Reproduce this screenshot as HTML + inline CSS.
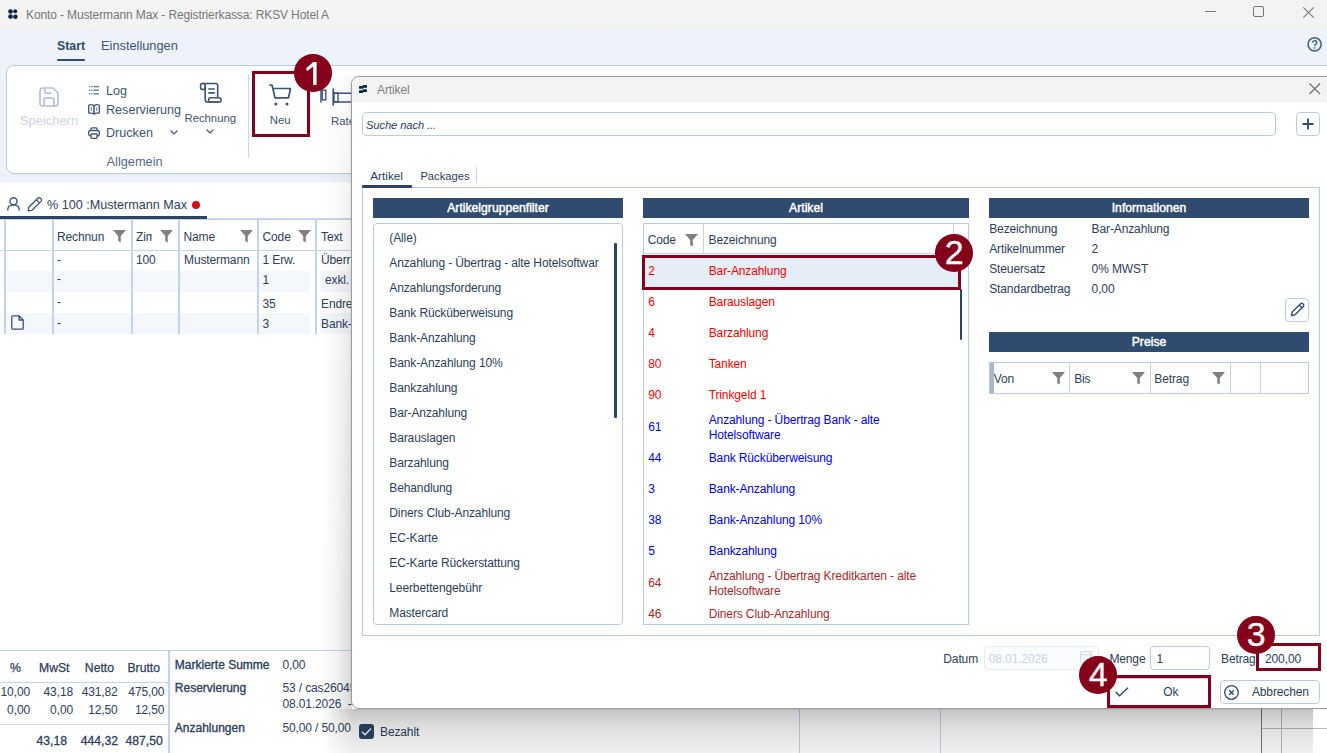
<!DOCTYPE html>
<html><head><meta charset="utf-8">
<style>
*{box-sizing:border-box;margin:0;padding:0}
html,body{width:1327px;height:753px;overflow:hidden;background:#fff;font-family:"Liberation Sans",sans-serif;position:relative}
.a{position:absolute;white-space:nowrap}
.t{position:absolute;white-space:nowrap;line-height:1}
svg{overflow:visible}
</style></head><body>
<div class="a" style="left:0px;top:0px;width:1327px;height:30px;background:#f3f3f3"></div>
<svg class="a" style="left:8px;top:9px" width="10" height="11" viewBox="0 0 10 11"><circle cx="2.5" cy="2.5" r="2.3" fill="#0e2440"/><circle cx="7.2" cy="2.2" r="2" fill="#0e2440"/><circle cx="2.5" cy="7.6" r="2.3" fill="#0e2440"/><circle cx="7.4" cy="7.8" r="2.3" fill="#0e2440"/></svg>
<div class="t" style="left:26px;top:9px;font-size:12px;color:#777777;font-weight:normal;font-style:normal;letter-spacing:-0.12px;">Konto - Mustermann Max - Registrierkassa: RKSV Hotel A</div>
<div class="a" style="left:1205px;top:11px;width:11px;height:1px;background:#7a7a7a"></div>
<div class="a" style="left:1253px;top:6px;width:11px;height:11px;border:1px solid #777;border-radius:2px"></div>
<svg class="a" style="left:1303px;top:6.5px" width="11" height="11" viewBox="0 0 11 11"><path d="M0.3 0.3 L10.7 10.7 M10.7 0.3 L0.3 10.7" stroke="#777" stroke-width="1.1"/></svg>
<div class="a" style="left:0px;top:27px;width:1327px;height:156px;background:#eef2f9;clip-path:polygon(0 2.5px,100% 0.2px,100% 100%,0 100%)"></div>
<div class="t" style="left:57px;top:40px;font-size:12.3px;color:#2f4a6e;font-weight:bold;font-style:normal;">Start</div>
<div class="t" style="left:101px;top:40px;font-size:12.8px;color:#3d5476;font-weight:normal;font-style:normal;">Einstellungen</div>
<div class="a" style="left:57px;top:59px;width:28px;height:2px;background:#2f4a6e;border-radius:1px"></div>
<svg class="a" style="left:1307px;top:37px" width="15" height="15" viewBox="0 0 15 15"><circle cx="7.6" cy="7.3" r="6.6" fill="none" stroke="#4a6388" stroke-width="1.6"/><path d="M5.5 5.7 a2.1 2.1 0 1 1 3 1.9 c-0.7 0.3 -0.9 0.7 -0.9 1.4" fill="none" stroke="#4a6388" stroke-width="1.5"/><circle cx="7.6" cy="10.8" r="0.9" fill="#4a6388"/></svg>
<div class="a" style="left:6px;top:65px;width:1400px;height:109px;background:#fff;border:1px solid #b8cbe6;border-radius:8px"></div>
<div class="a" style="left:0px;top:174px;width:1327px;height:9px;background:linear-gradient(#e9eef6,#f3f6fa)"></div>
<div class="a" style="left:0px;top:183px;width:1327px;height:570px;background:#fff"></div>
<svg class="a" style="left:39px;top:87px" width="20" height="20" viewBox="0 0 20 20"><path d="M2.5 1 H14 L19 6 V16.5 a2.5 2.5 0 0 1 -2.5 2.5 H3.5 a2.5 2.5 0 0 1 -2.5 -2.5 V3.5 a2.5 2.5 0 0 1 2.5 -2.5 Z" fill="none" stroke="#b5c1d1" stroke-width="1.7"/><path d="M6 1.2 V5 a1.2 1.2 0 0 0 1.2 1.2 H12.5" fill="none" stroke="#b5c1d1" stroke-width="1.7"/><path d="M5 19 V12.5 a1.3 1.3 0 0 1 1.3 -1.3 H13.7 a1.3 1.3 0 0 1 1.3 1.3 V19" fill="none" stroke="#b5c1d1" stroke-width="1.7"/></svg>
<div class="t" style="left:20px;top:115px;font-size:12.9px;color:#cdd5df;font-weight:normal;font-style:normal;">Speichern</div>
<svg class="a" style="left:89px;top:86px" width="10" height="9" viewBox="0 0 10 9"><g fill="#3d5476" opacity="0.8"><rect x="0" y="0" width="1.3" height="1.3"/><rect x="2.2" y="0" width="1.3" height="1.3"/><rect x="4.4" y="0" width="5.6" height="1.3"/><rect x="0" y="3.6" width="1.3" height="1.3"/><rect x="2.2" y="3.6" width="1.3" height="1.3"/><rect x="4.4" y="3.6" width="5.6" height="1.3"/><rect x="0" y="7.2" width="1.3" height="1.3"/><rect x="2.2" y="7.2" width="1.3" height="1.3"/><rect x="4.4" y="7.2" width="5.6" height="1.3"/></g></svg>
<div class="t" style="left:106px;top:85px;font-size:12.6px;color:#3d5476;font-weight:normal;font-style:normal;">Log</div>
<svg class="a" style="left:88px;top:104px" width="12" height="11" viewBox="0 0 12 11"><path d="M6 1.8 C4.5 0.6 2.5 0.6 1.2 1 a0.6 0.6 0 0 0 -0.5 0.6 V8.6 a0.6 0.6 0 0 0 0.6 0.6 C2.8 8.9 4.6 9 6 9.8 C7.4 9 9.2 8.9 10.7 9.2 a0.6 0.6 0 0 0 0.6 -0.6 V1.6 a0.6 0.6 0 0 0 -0.5 -0.6 C9.5 0.6 7.5 0.6 6 1.8 Z" fill="none" stroke="#3d5476" stroke-width="1.3"/><path d="M6 1.8 V10.8" stroke="#3d5476" stroke-width="1.5"/><path d="M3.3 3.2 V6.8 M8.7 3.2 V6.8" stroke="#3d5476" stroke-width="0.8"/></svg>
<div class="t" style="left:106px;top:104px;font-size:12.6px;color:#3d5476;font-weight:normal;font-style:normal;">Reservierung</div>
<svg class="a" style="left:88px;top:127px" width="12" height="12" viewBox="0 0 12 12"><path d="M3 3.5 V1.8 a1 1 0 0 1 1 -1 H8 a1 1 0 0 1 1 1 V3.5" fill="none" stroke="#3d5476" stroke-width="1.3"/><rect x="0.7" y="3.5" width="10.6" height="5.5" rx="2" fill="none" stroke="#3d5476" stroke-width="1.3"/><rect x="3" y="7" width="6" height="4.3" rx="0.8" fill="#fff" stroke="#3d5476" stroke-width="1.3"/></svg>
<div class="t" style="left:106px;top:127px;font-size:12.6px;color:#3d5476;font-weight:normal;font-style:normal;">Drucken</div>
<svg class="a" style="left:170px;top:130px" width="8" height="5" viewBox="0 0 8 5"><path d="M0.5 0.5 L4 4 L7.5 0.5" fill="none" stroke="#3d5476" stroke-width="1.1"/></svg>
<svg class="a" style="left:196px;top:80px" width="30" height="26" viewBox="0 0 30 26"><g fill="none" stroke="#3d5476" stroke-width="1.6"><rect x="4.6" y="3.5" width="4.6" height="5.9" rx="1.7"/><path d="M6.3 3.5 H20 a1.7 1.7 0 0 1 1.7 1.7 V17.8"/><path d="M9.2 5 V19.8 a2.2 2.2 0 0 0 2.2 2.2 H23"/><rect x="12.6" y="17.8" width="12.4" height="4.2" rx="2.1"/><path d="M12.3 9 H18.8 M12.3 12.9 H18.8"/></g></svg>
<div class="t" style="left:184.5px;top:113px;font-size:11.3px;color:#3d5476;font-weight:normal;font-style:normal;">Rechnung</div>
<svg class="a" style="left:206px;top:129px" width="8" height="5" viewBox="0 0 8 5"><path d="M0.5 0.5 L4 4 L7.5 0.5" fill="none" stroke="#3d5476" stroke-width="1.1"/></svg>
<div class="t" style="left:106.5px;top:156px;font-size:12.8px;color:#56698a;font-weight:normal;font-style:normal;">Allgemein</div>
<div class="a" style="left:248px;top:75px;width:1px;height:83px;background:#c7d6ea"></div>
<svg class="a" style="left:269px;top:84px" width="23" height="23" viewBox="0 0 23 23"><path d="M0.8 1 H3 L6 13.8 H19.5 L21.5 4.5 H4.5" fill="none" stroke="#3d5476" stroke-width="1.7" stroke-linejoin="round" stroke-linecap="round"/><circle cx="6.8" cy="20" r="1.5" fill="#3d5476"/><circle cx="18" cy="20" r="1.5" fill="#3d5476"/></svg>
<div class="t" style="left:269.7px;top:115px;font-size:11.4px;color:#3d5476;font-weight:normal;font-style:normal;">Neu</div>
<svg class="a" style="left:320px;top:88px" width="32" height="18" viewBox="0 0 32 18"><path d="M1 2 V14.5" stroke="#3d5476" stroke-width="1.5"/><rect x="2.2" y="2.2" width="3.6" height="9.6" fill="none" stroke="#3d5476" stroke-width="1.4"/><path d="M13.2 0.5 V17.5" stroke="#3d5476" stroke-width="1.6"/><rect x="14" y="5" width="4" height="9" fill="none" stroke="#3d5476" stroke-width="1.4"/><path d="M14 5.3 H32 M14 14 H32" stroke="#3d5476" stroke-width="1.6"/></svg>
<div class="t" style="left:331px;top:116px;font-size:11.4px;color:#3d5476;font-weight:normal;font-style:normal;">Rate</div>
<svg class="a" style="left:7px;top:197px" width="13" height="14" viewBox="0 0 13 14"><circle cx="6.5" cy="4.2" r="3.5" fill="none" stroke="#3d5476" stroke-width="1.4"/><path d="M0.8 13.5 V12.5 a4.5 4.5 0 0 1 4.5 -4.5 H7.7 a4.5 4.5 0 0 1 4.5 4.5 V13.5" fill="none" stroke="#3d5476" stroke-width="1.4"/></svg>
<svg class="a" style="left:27px;top:197px" width="16" height="15" viewBox="0 0 16 15"><path d="M1.2 13.8 L1.8 10.2 L10.8 1.2 a1.8 1.8 0 0 1 2.6 0 L14 1.8 a1.8 1.8 0 0 1 0 2.6 L5 13.3 Z M9.3 2.8 L12.4 5.9" fill="none" stroke="#3d5476" stroke-width="1.3" stroke-linejoin="round"/></svg>
<div class="t" style="left:47px;top:199px;font-size:12.6px;color:#2d4060;font-weight:normal;font-style:normal;">% 100 :Mustermann Max</div>
<div class="a" style="left:191.5px;top:200.5px;width:8px;height:8px;border-radius:50%;background:#d40f14"></div>
<div class="a" style="left:0px;top:218px;width:351px;height:1px;background:#c9d8ec"></div>
<div class="a" style="left:0px;top:216px;width:207px;height:2.5px;background:#2b4466"></div>
<div class="a" style="left:0px;top:219px;width:351px;height:1px;background:#c3d4ea"></div>
<div class="a" style="left:0px;top:250px;width:351px;height:1px;background:#c3d4ea"></div>
<div class="a" style="left:5px;top:271px;width:305px;height:21px;background:#f4f7fb"></div>
<div class="a" style="left:5px;top:313px;width:305px;height:21px;background:#f4f7fb"></div>
<div class="a" style="left:320px;top:271px;width:31px;height:21px;background:#f4f7fb"></div>
<div class="a" style="left:320px;top:313px;width:31px;height:21px;background:#f4f7fb"></div>
<div class="a" style="left:4px;top:219px;width:1.5px;height:115px;background:#c3d4ea"></div>
<div class="a" style="left:52px;top:219px;width:1.5px;height:115px;background:#c3d4ea"></div>
<div class="a" style="left:131px;top:219px;width:1.5px;height:115px;background:#c3d4ea"></div>
<div class="a" style="left:178px;top:219px;width:1.5px;height:115px;background:#c3d4ea"></div>
<div class="a" style="left:257px;top:219px;width:1.5px;height:115px;background:#c3d4ea"></div>
<div class="a" style="left:315px;top:219px;width:1.5px;height:115px;background:#c3d4ea"></div>
<div class="t" style="left:57px;top:231px;font-size:12px;color:#2d4060;font-weight:normal;font-style:normal;letter-spacing:-0.12px;">Rechnun</div>
<div class="t" style="left:136px;top:231px;font-size:12px;color:#2d4060;font-weight:normal;font-style:normal;letter-spacing:-0.12px;">Zim</div>
<div class="a" style="left:152px;top:228px;width:10px;height:16px;background:#fff"></div>
<div class="t" style="left:183.5px;top:231px;font-size:12px;color:#2d4060;font-weight:normal;font-style:normal;letter-spacing:-0.12px;">Name</div>
<div class="t" style="left:262.5px;top:231px;font-size:12px;color:#2d4060;font-weight:normal;font-style:normal;letter-spacing:-0.12px;">Code</div>
<div class="t" style="left:321px;top:231px;font-size:12px;color:#2d4060;font-weight:normal;font-style:normal;letter-spacing:-0.12px;">Text</div>
<svg class="a" style="left:113px;top:230px" width="13" height="13" viewBox="0 0 13 13"><path d="M0 0 H13 L7.8 6 V12.5 L5.2 11 V6 Z" fill="#808080"/></svg>
<svg class="a" style="left:160px;top:230px" width="13" height="13" viewBox="0 0 13 13"><path d="M0 0 H13 L7.8 6 V12.5 L5.2 11 V6 Z" fill="#808080"/></svg>
<svg class="a" style="left:239.5px;top:230px" width="13" height="13" viewBox="0 0 13 13"><path d="M0 0 H13 L7.8 6 V12.5 L5.2 11 V6 Z" fill="#808080"/></svg>
<svg class="a" style="left:297.5px;top:230px" width="13" height="13" viewBox="0 0 13 13"><path d="M0 0 H13 L7.8 6 V12.5 L5.2 11 V6 Z" fill="#808080"/></svg>
<div class="t" style="left:57px;top:254px;font-size:12px;color:#2d4060;font-weight:normal;font-style:normal;letter-spacing:-0.12px;">-</div>
<div class="t" style="left:136px;top:254px;font-size:12px;color:#2d4060;font-weight:normal;font-style:normal;letter-spacing:-0.12px;">100</div>
<div class="t" style="left:184px;top:254px;font-size:12px;color:#2d4060;font-weight:normal;font-style:normal;letter-spacing:-0.12px;">Mustermann</div>
<div class="t" style="left:262.5px;top:254px;font-size:12px;color:#2d4060;font-weight:normal;font-style:normal;letter-spacing:-0.12px;">1 Erw.</div>
<div class="t" style="left:321px;top:254px;font-size:12px;color:#2d4060;font-weight:normal;font-style:normal;letter-spacing:-0.12px;">Überr</div>
<div class="t" style="left:57px;top:273px;font-size:12px;color:#2d4060;font-weight:normal;font-style:normal;letter-spacing:-0.12px;">-</div>
<div class="t" style="left:262.5px;top:274px;font-size:12px;color:#2d4060;font-weight:normal;font-style:normal;letter-spacing:-0.12px;">1</div>
<div class="t" style="left:325px;top:274px;font-size:12px;color:#2d4060;font-weight:normal;font-style:normal;letter-spacing:-0.12px;">exkl.</div>
<div class="t" style="left:57px;top:296px;font-size:12px;color:#2d4060;font-weight:normal;font-style:normal;letter-spacing:-0.12px;">-</div>
<div class="t" style="left:262.5px;top:298px;font-size:12px;color:#2d4060;font-weight:normal;font-style:normal;letter-spacing:-0.12px;">35</div>
<div class="t" style="left:321px;top:298px;font-size:12px;color:#2d4060;font-weight:normal;font-style:normal;letter-spacing:-0.12px;">Endre</div>
<div class="t" style="left:57px;top:317px;font-size:12px;color:#2d4060;font-weight:normal;font-style:normal;letter-spacing:-0.12px;">-</div>
<div class="t" style="left:262.5px;top:318px;font-size:12px;color:#2d4060;font-weight:normal;font-style:normal;letter-spacing:-0.12px;">3</div>
<div class="t" style="left:321px;top:318px;font-size:12px;color:#2d4060;font-weight:normal;font-style:normal;letter-spacing:-0.12px;">Bank-</div>
<svg class="a" style="left:11px;top:315px" width="13" height="15" viewBox="0 0 13 15"><path d="M0.8 1.8 a1 1 0 0 1 1 -1 H8 L12.2 5 V13.2 a1 1 0 0 1 -1 1 H1.8 a1 1 0 0 1 -1 -1 Z M8 0.8 V5 H12.2" fill="none" stroke="#3d5476" stroke-width="1.3" stroke-linejoin="round"/></svg>
<div class="a" style="left:0px;top:650px;width:351px;height:1px;background:#c3d4ea"></div>
<div class="a" style="left:168px;top:650px;width:1.5px;height:103px;background:#c3d4ea"></div>
<div class="a" style="left:0px;top:682px;width:169px;height:1px;background:#c3d4ea"></div>
<div class="a" style="left:0px;top:724px;width:169px;height:1px;background:#c3d4ea"></div>
<div class="t" style="left:10px;top:662px;font-size:12.2px;color:#2d4060;font-weight:normal;font-style:normal;-webkit-text-stroke:0.25px #2d4060;">%</div>
<div class="t" style="right:1257.5px;top:662px;font-size:12.2px;color:#2d4060;font-weight:normal;font-style:normal;-webkit-text-stroke:0.25px #2d4060;">MwSt</div>
<div class="t" style="right:1213px;top:662px;font-size:12.2px;color:#2d4060;font-weight:normal;font-style:normal;-webkit-text-stroke:0.25px #2d4060;">Netto</div>
<div class="t" style="right:1167px;top:662px;font-size:12.2px;color:#2d4060;font-weight:normal;font-style:normal;-webkit-text-stroke:0.25px #2d4060;">Brutto</div>
<div class="t" style="right:1297px;top:686px;font-size:12px;color:#2d4060;font-weight:normal;font-style:normal;letter-spacing:-0.12px;">10,00</div>
<div class="t" style="right:1254px;top:686px;font-size:12px;color:#2d4060;font-weight:normal;font-style:normal;letter-spacing:-0.12px;">43,18</div>
<div class="t" style="right:1209.4px;top:686px;font-size:12px;color:#2d4060;font-weight:normal;font-style:normal;letter-spacing:-0.12px;">431,82</div>
<div class="t" style="right:1162.7px;top:686px;font-size:12px;color:#2d4060;font-weight:normal;font-style:normal;letter-spacing:-0.12px;">475,00</div>
<div class="t" style="right:1297px;top:704px;font-size:12px;color:#2d4060;font-weight:normal;font-style:normal;letter-spacing:-0.12px;">0,00</div>
<div class="t" style="right:1254px;top:704px;font-size:12px;color:#2d4060;font-weight:normal;font-style:normal;letter-spacing:-0.12px;">0,00</div>
<div class="t" style="right:1209.4px;top:704px;font-size:12px;color:#2d4060;font-weight:normal;font-style:normal;letter-spacing:-0.12px;">12,50</div>
<div class="t" style="right:1162.7px;top:704px;font-size:12px;color:#2d4060;font-weight:normal;font-style:normal;letter-spacing:-0.12px;">12,50</div>
<div class="t" style="right:1260px;top:735px;font-size:12.2px;color:#2d4060;font-weight:normal;font-style:normal;-webkit-text-stroke:0.3px #2d4060;">43,18</div>
<div class="t" style="right:1209px;top:735px;font-size:12.2px;color:#2d4060;font-weight:normal;font-style:normal;-webkit-text-stroke:0.3px #2d4060;">444,32</div>
<div class="t" style="right:1164.2px;top:735px;font-size:12.2px;color:#2d4060;font-weight:normal;font-style:normal;-webkit-text-stroke:0.3px #2d4060;">487,50</div>
<div class="t" style="left:174.8px;top:659px;font-size:12px;color:#2d4060;font-weight:normal;font-style:normal;-webkit-text-stroke:0.35px #2d4060;">Markierte Summe</div>
<div class="t" style="left:282.4px;top:659px;font-size:12px;color:#2d4060;font-weight:normal;font-style:normal;letter-spacing:-0.12px;">0,00</div>
<div class="t" style="left:174.8px;top:682px;font-size:12px;color:#2d4060;font-weight:normal;font-style:normal;-webkit-text-stroke:0.35px #2d4060;">Reservierung</div>
<div class="t" style="left:282.4px;top:682px;font-size:12px;color:#2d4060;font-weight:normal;font-style:normal;letter-spacing:-0.12px;">53 / cas26045</div>
<div class="t" style="left:282.4px;top:698px;font-size:12px;color:#2d4060;font-weight:normal;font-style:normal;letter-spacing:-0.12px;white-space:pre;">08.01.2026  -</div>
<div class="t" style="left:174.8px;top:722px;font-size:12px;color:#2d4060;font-weight:normal;font-style:normal;-webkit-text-stroke:0.35px #2d4060;">Anzahlungen</div>
<div class="t" style="left:282.4px;top:722px;font-size:12px;color:#2d4060;font-weight:normal;font-style:normal;letter-spacing:-0.12px;">50,00 / 50,00</div>
<div class="a" style="left:359px;top:724px;width:15px;height:15px;border-radius:3px;background:#2b4466"></div>
<svg class="a" style="left:359px;top:724px" width="15" height="15" viewBox="0 0 15 15"><path d="M3 7.8 L6 10.8 L12 4.5" fill="none" stroke="#fff" stroke-width="1.3"/></svg>
<div class="t" style="left:380px;top:726px;font-size:12px;color:#2d4060;font-weight:normal;font-style:normal;letter-spacing:-0.12px;">Bezahlt</div>
<div class="a" style="left:799px;top:700px;width:1px;height:53px;background:#c3d4ea"></div>
<div class="a" style="left:940px;top:700px;width:1px;height:53px;background:#c3d4ea"></div>
<div class="a" style="left:1261px;top:709px;width:66px;height:44px;background:#fff"></div>
<div class="a" style="left:1261px;top:709px;width:1.2px;height:44px;background:#777"></div>
<div class="a" style="left:1281px;top:709px;width:1px;height:44px;background:#bbb"></div>
<div class="a" style="left:1262px;top:728px;width:65px;height:1px;background:#bbb"></div>
<div class="a" style="left:321px;top:76px;width:31px;height:633px;background:linear-gradient(to right,rgba(0,0,0,0),rgba(0,0,0,.05) 50%,rgba(0,0,0,.15));-webkit-mask-image:linear-gradient(rgba(0,0,0,.15),rgba(0,0,0,.5) 30%,#000 85%)"></div>
<div class="a" style="left:321px;top:709px;width:992px;height:44px;background:linear-gradient(rgba(0,0,0,.23),rgba(0,0,0,.13) 40%,rgba(0,0,0,.06));-webkit-mask-image:linear-gradient(to right,transparent,#000 32px)"></div>
<div class="a" style="left:351px;top:76px;width:990px;height:633px;background:#fff;border:1px solid #9c9c9c;border-radius:8px;box-shadow:0 0 3px rgba(0,0,0,.12)"></div>
<div class="a" style="left:352px;top:77px;width:990px;height:25px;background:#f3f3f3;border-radius:7px 0 0 0"></div>
<svg class="a" style="left:359px;top:84px" width="8" height="10" viewBox="0 0 8 10"><g fill="#0c2541"><rect x="0" y="2" width="4.3" height="2.8" rx="0.6"/><rect x="3.7" y="1" width="4.3" height="2.8" rx="0.6"/><rect x="0" y="6.3" width="4.3" height="2.8" rx="0.6"/><rect x="3.7" y="5.3" width="4.3" height="2.8" rx="0.6"/></g></svg>
<div class="t" style="left:377px;top:84px;font-size:12px;color:#808080;font-weight:normal;font-style:normal;letter-spacing:-0.12px;">Artikel</div>
<svg class="a" style="left:1309px;top:83px" width="12" height="12" viewBox="0 0 12 12"><path d="M0.5 0.5 L11 11 M11 0.5 L0.5 11" stroke="#6a6a6a" stroke-width="1.1"/></svg>
<div class="a" style="left:362px;top:112px;width:914px;height:24px;border:1px solid #b8cbe6;border-radius:4px;background:#fff"></div>
<div class="t" style="left:366px;top:120px;font-size:11.2px;color:#2c3e5c;font-weight:normal;font-style:italic;letter-spacing:-0.1px;">Suche nach ...</div>
<div class="a" style="left:1296px;top:112px;width:24px;height:24px;border:1px solid #b8cbe6;border-radius:4px;background:#fff"></div>
<svg class="a" style="left:1302px;top:118px" width="12" height="12" viewBox="0 0 12 12"><path d="M6 0.5 V11.5 M0.5 6 H11.5" stroke="#2f4a6e" stroke-width="1.8"/></svg>
<div class="t" style="left:370.2px;top:171px;font-size:11.8px;color:#2c3e5c;font-weight:normal;font-style:normal;">Artikel</div>
<div class="t" style="left:420.4px;top:171px;font-size:11.2px;color:#2c3e5c;font-weight:normal;font-style:normal;">Packages</div>
<div class="a" style="left:476px;top:167px;width:1px;height:16px;background:#c3d4ea"></div>
<div class="a" style="left:362px;top:187px;width:958px;height:449px;border:1px solid #b8cbe6"></div>
<div class="a" style="left:362px;top:185px;width:50px;height:2.5px;background:#2b4466;border-radius:1px"></div>
<div class="a" style="left:373px;top:198px;width:250px;height:20px;background:#2f4b6f"></div>
<div class="t" style="left:498px;transform:translateX(-50%);top:202px;font-size:12.2px;color:#fff;font-weight:normal;font-style:normal;-webkit-text-stroke:0.45px #fff;">Artikelgruppenfilter</div>
<div class="a" style="left:643px;top:198px;width:326px;height:20px;background:#2f4b6f"></div>
<div class="t" style="left:806px;transform:translateX(-50%);top:202px;font-size:12.2px;color:#fff;font-weight:normal;font-style:normal;-webkit-text-stroke:0.45px #fff;">Artikel</div>
<div class="a" style="left:989px;top:198px;width:320px;height:20px;background:#2f4b6f"></div>
<div class="t" style="left:1149px;transform:translateX(-50%);top:202px;font-size:12.2px;color:#fff;font-weight:normal;font-style:normal;-webkit-text-stroke:0.45px #fff;">Informationen</div>
<div class="a" style="left:373px;top:223px;width:250px;height:402px;border:1px solid #b8cbe6;border-radius:4px"></div>
<div class="t" style="left:389.3px;top:232px;font-size:12px;color:#2c3e5c;font-weight:normal;font-style:normal;letter-spacing:-0.12px;width:218px;clip-path:inset(-10px 0 -10px 0);">(Alle)</div>
<div class="t" style="left:389.3px;top:257px;font-size:12px;color:#2c3e5c;font-weight:normal;font-style:normal;letter-spacing:-0.12px;width:218px;clip-path:inset(-10px 0 -10px 0);">Anzahlung - Übertrag - alte Hotelsoftwar</div>
<div class="t" style="left:389.3px;top:282px;font-size:12px;color:#2c3e5c;font-weight:normal;font-style:normal;letter-spacing:-0.12px;width:218px;clip-path:inset(-10px 0 -10px 0);">Anzahlungsforderung</div>
<div class="t" style="left:389.3px;top:307px;font-size:12px;color:#2c3e5c;font-weight:normal;font-style:normal;letter-spacing:-0.12px;width:218px;clip-path:inset(-10px 0 -10px 0);">Bank Rücküberweisung</div>
<div class="t" style="left:389.3px;top:332px;font-size:12px;color:#2c3e5c;font-weight:normal;font-style:normal;letter-spacing:-0.12px;width:218px;clip-path:inset(-10px 0 -10px 0);">Bank-Anzahlung</div>
<div class="t" style="left:389.3px;top:357px;font-size:12px;color:#2c3e5c;font-weight:normal;font-style:normal;letter-spacing:-0.12px;width:218px;clip-path:inset(-10px 0 -10px 0);">Bank-Anzahlung 10%</div>
<div class="t" style="left:389.3px;top:382px;font-size:12px;color:#2c3e5c;font-weight:normal;font-style:normal;letter-spacing:-0.12px;width:218px;clip-path:inset(-10px 0 -10px 0);">Bankzahlung</div>
<div class="t" style="left:389.3px;top:407px;font-size:12px;color:#2c3e5c;font-weight:normal;font-style:normal;letter-spacing:-0.12px;width:218px;clip-path:inset(-10px 0 -10px 0);">Bar-Anzahlung</div>
<div class="t" style="left:389.3px;top:432px;font-size:12px;color:#2c3e5c;font-weight:normal;font-style:normal;letter-spacing:-0.12px;width:218px;clip-path:inset(-10px 0 -10px 0);">Barauslagen</div>
<div class="t" style="left:389.3px;top:457px;font-size:12px;color:#2c3e5c;font-weight:normal;font-style:normal;letter-spacing:-0.12px;width:218px;clip-path:inset(-10px 0 -10px 0);">Barzahlung</div>
<div class="t" style="left:389.3px;top:482px;font-size:12px;color:#2c3e5c;font-weight:normal;font-style:normal;letter-spacing:-0.12px;width:218px;clip-path:inset(-10px 0 -10px 0);">Behandlung</div>
<div class="t" style="left:389.3px;top:507px;font-size:12px;color:#2c3e5c;font-weight:normal;font-style:normal;letter-spacing:-0.12px;width:218px;clip-path:inset(-10px 0 -10px 0);">Diners Club-Anzahlung</div>
<div class="t" style="left:389.3px;top:532px;font-size:12px;color:#2c3e5c;font-weight:normal;font-style:normal;letter-spacing:-0.12px;width:218px;clip-path:inset(-10px 0 -10px 0);">EC-Karte</div>
<div class="t" style="left:389.3px;top:557px;font-size:12px;color:#2c3e5c;font-weight:normal;font-style:normal;letter-spacing:-0.12px;width:218px;clip-path:inset(-10px 0 -10px 0);">EC-Karte Rückerstattung</div>
<div class="t" style="left:389.3px;top:582px;font-size:12px;color:#2c3e5c;font-weight:normal;font-style:normal;letter-spacing:-0.12px;width:218px;clip-path:inset(-10px 0 -10px 0);">Leerbettengebühr</div>
<div class="t" style="left:389.3px;top:607px;font-size:12px;color:#2c3e5c;font-weight:normal;font-style:normal;letter-spacing:-0.12px;width:218px;clip-path:inset(-10px 0 -10px 0);">Mastercard</div>
<div class="a" style="left:614px;top:243px;width:2.5px;height:175px;background:#2b4466;border-radius:1px"></div>
<div class="a" style="left:643px;top:223px;width:326px;height:402px;border:1px solid #b8cbe6"></div>
<div class="a" style="left:644px;top:253px;width:324px;height:1px;background:#c3d4ea"></div>
<div class="a" style="left:703px;top:224px;width:1px;height:30px;background:#c3d4ea"></div>
<div class="a" style="left:953px;top:224px;width:1px;height:30px;background:#c3d4ea"></div>
<div class="t" style="left:647.7px;top:234px;font-size:12px;color:#2c3e5c;font-weight:normal;font-style:normal;letter-spacing:-0.12px;">Code</div>
<svg class="a" style="left:685px;top:233.5px" width="13" height="13" viewBox="0 0 13 13"><path d="M0 0 H13 L7.8 6 V12.5 L5.2 11 V6 Z" fill="#808080"/></svg>
<div class="t" style="left:708.5px;top:234px;font-size:12px;color:#2c3e5c;font-weight:normal;font-style:normal;letter-spacing:-0.12px;">Bezeichnung</div>
<div class="a" style="left:644px;top:255px;width:316px;height:33px;background:#e5edf7"></div>
<div class="t" style="left:648.3px;top:265px;font-size:12px;color:#ff0000;font-weight:normal;font-style:normal;letter-spacing:-0.12px;">2</div>
<div class="t" style="left:708.7px;top:265px;font-size:12px;color:#ff0000;font-weight:normal;font-style:normal;letter-spacing:-0.12px;">Bar-Anzahlung</div>
<div class="t" style="left:648.3px;top:296px;font-size:12px;color:#ff0000;font-weight:normal;font-style:normal;letter-spacing:-0.12px;">6</div>
<div class="t" style="left:708.7px;top:296px;font-size:12px;color:#ff0000;font-weight:normal;font-style:normal;letter-spacing:-0.12px;">Barauslagen</div>
<div class="t" style="left:648.3px;top:327px;font-size:12px;color:#ff0000;font-weight:normal;font-style:normal;letter-spacing:-0.12px;">4</div>
<div class="t" style="left:708.7px;top:327px;font-size:12px;color:#ff0000;font-weight:normal;font-style:normal;letter-spacing:-0.12px;">Barzahlung</div>
<div class="t" style="left:648.3px;top:358px;font-size:12px;color:#ff0000;font-weight:normal;font-style:normal;letter-spacing:-0.12px;">80</div>
<div class="t" style="left:708.7px;top:358px;font-size:12px;color:#ff0000;font-weight:normal;font-style:normal;letter-spacing:-0.12px;">Tanken</div>
<div class="t" style="left:648.3px;top:389px;font-size:12px;color:#ff0000;font-weight:normal;font-style:normal;letter-spacing:-0.12px;">90</div>
<div class="t" style="left:708.7px;top:389px;font-size:12px;color:#ff0000;font-weight:normal;font-style:normal;letter-spacing:-0.12px;">Trinkgeld 1</div>
<div class="t" style="left:648.3px;top:421px;font-size:12px;color:#0000ff;font-weight:normal;font-style:normal;letter-spacing:-0.12px;">61</div>
<div class="t" style="left:708.7px;top:414px;font-size:12px;color:#0000ff;font-weight:normal;font-style:normal;letter-spacing:-0.12px;">Anzahlung - Übertrag Bank - alte</div>
<div class="t" style="left:708.7px;top:429px;font-size:12px;color:#0000ff;font-weight:normal;font-style:normal;letter-spacing:-0.12px;">Hotelsoftware</div>
<div class="t" style="left:648.3px;top:452px;font-size:12px;color:#0000ff;font-weight:normal;font-style:normal;letter-spacing:-0.12px;">44</div>
<div class="t" style="left:708.7px;top:452px;font-size:12px;color:#0000ff;font-weight:normal;font-style:normal;letter-spacing:-0.12px;">Bank Rücküberweisung</div>
<div class="t" style="left:648.3px;top:483px;font-size:12px;color:#0000ff;font-weight:normal;font-style:normal;letter-spacing:-0.12px;">3</div>
<div class="t" style="left:708.7px;top:483px;font-size:12px;color:#0000ff;font-weight:normal;font-style:normal;letter-spacing:-0.12px;">Bank-Anzahlung</div>
<div class="t" style="left:648.3px;top:514px;font-size:12px;color:#0000ff;font-weight:normal;font-style:normal;letter-spacing:-0.12px;">38</div>
<div class="t" style="left:708.7px;top:514px;font-size:12px;color:#0000ff;font-weight:normal;font-style:normal;letter-spacing:-0.12px;">Bank-Anzahlung 10%</div>
<div class="t" style="left:648.3px;top:545px;font-size:12px;color:#0000ff;font-weight:normal;font-style:normal;letter-spacing:-0.12px;">5</div>
<div class="t" style="left:708.7px;top:545px;font-size:12px;color:#0000ff;font-weight:normal;font-style:normal;letter-spacing:-0.12px;">Bankzahlung</div>
<div class="t" style="left:648.3px;top:577px;font-size:12px;color:#a52a2a;font-weight:normal;font-style:normal;letter-spacing:-0.12px;">64</div>
<div class="t" style="left:708.7px;top:570px;font-size:12px;color:#a52a2a;font-weight:normal;font-style:normal;letter-spacing:-0.12px;">Anzahlung - Übertrag Kreditkarten - alte</div>
<div class="t" style="left:708.7px;top:585px;font-size:12px;color:#a52a2a;font-weight:normal;font-style:normal;letter-spacing:-0.12px;">Hotelsoftware</div>
<div class="t" style="left:648.3px;top:608px;font-size:12px;color:#a52a2a;font-weight:normal;font-style:normal;letter-spacing:-0.12px;">46</div>
<div class="t" style="left:708.7px;top:608px;font-size:12px;color:#a52a2a;font-weight:normal;font-style:normal;letter-spacing:-0.12px;">Diners Club-Anzahlung</div>
<div class="a" style="left:959.5px;top:289px;width:2.5px;height:51px;background:#2b4466;border-radius:1px"></div>
<div class="t" style="left:989.2px;top:223px;font-size:12px;color:#2c3e5c;font-weight:normal;font-style:normal;letter-spacing:-0.12px;">Bezeichnung</div>
<div class="t" style="left:1091.6px;top:223px;font-size:12px;color:#2c3e5c;font-weight:normal;font-style:normal;letter-spacing:-0.12px;">Bar-Anzahlung</div>
<div class="t" style="left:989.2px;top:243px;font-size:12px;color:#2c3e5c;font-weight:normal;font-style:normal;letter-spacing:-0.12px;">Artikelnummer</div>
<div class="t" style="left:1091.6px;top:243px;font-size:12px;color:#2c3e5c;font-weight:normal;font-style:normal;letter-spacing:-0.12px;">2</div>
<div class="t" style="left:989.2px;top:263px;font-size:12px;color:#2c3e5c;font-weight:normal;font-style:normal;letter-spacing:-0.12px;">Steuersatz</div>
<div class="t" style="left:1091.6px;top:263px;font-size:12px;color:#2c3e5c;font-weight:normal;font-style:normal;letter-spacing:-0.12px;">0% MWST</div>
<div class="t" style="left:989.2px;top:283px;font-size:12px;color:#2c3e5c;font-weight:normal;font-style:normal;letter-spacing:-0.12px;">Standardbetrag</div>
<div class="t" style="left:1091.6px;top:283px;font-size:12px;color:#2c3e5c;font-weight:normal;font-style:normal;letter-spacing:-0.12px;">0,00</div>
<div class="a" style="left:1285px;top:298px;width:24px;height:24px;border:1px solid #b8cbe6;border-radius:4px;background:#fff"></div>
<svg class="a" style="left:1290px;top:302px" width="15" height="15" viewBox="0 0 15 15"><path d="M1.5 13.5 L2.2 10 L10.5 1.7 a1.6 1.6 0 0 1 2.3 0 L13.3 2.2 a1.6 1.6 0 0 1 0 2.3 L5 12.8 Z M9.2 3 L12 5.8" fill="none" stroke="#2f4a6e" stroke-width="1.3" stroke-linejoin="round"/></svg>
<div class="a" style="left:989px;top:332px;width:320px;height:20px;background:#2f4b6f"></div>
<div class="t" style="left:1149px;transform:translateX(-50%);top:336px;font-size:12.2px;color:#fff;font-weight:normal;font-style:normal;-webkit-text-stroke:0.45px #fff;">Preise</div>
<div class="a" style="left:989px;top:362px;width:320px;height:32px;border:1px solid #b8cbe6"></div>
<div class="a" style="left:990px;top:363px;width:3.5px;height:30px;background:#a9b7cb"></div>
<div class="a" style="left:1069px;top:363px;width:1px;height:30px;background:#c3d4ea"></div>
<div class="a" style="left:1149.5px;top:363px;width:1px;height:30px;background:#c3d4ea"></div>
<div class="a" style="left:1229.5px;top:363px;width:1px;height:30px;background:#c3d4ea"></div>
<div class="a" style="left:1259.5px;top:363px;width:1px;height:30px;background:#c3d4ea"></div>
<div class="t" style="left:993.8px;top:373px;font-size:12px;color:#2c3e5c;font-weight:normal;font-style:normal;letter-spacing:-0.12px;">Von</div>
<svg class="a" style="left:1051.5px;top:372px" width="13" height="13" viewBox="0 0 13 13"><path d="M0 0 H13 L7.8 6 V12.5 L5.2 11 V6 Z" fill="#808080"/></svg>
<div class="t" style="left:1074.2px;top:373px;font-size:12px;color:#2c3e5c;font-weight:normal;font-style:normal;letter-spacing:-0.12px;">Bis</div>
<svg class="a" style="left:1131.5px;top:372px" width="13" height="13" viewBox="0 0 13 13"><path d="M0 0 H13 L7.8 6 V12.5 L5.2 11 V6 Z" fill="#808080"/></svg>
<div class="t" style="left:1154.3px;top:373px;font-size:12px;color:#2c3e5c;font-weight:normal;font-style:normal;letter-spacing:-0.12px;">Betrag</div>
<svg class="a" style="left:1211.5px;top:372px" width="13" height="13" viewBox="0 0 13 13"><path d="M0 0 H13 L7.8 6 V12.5 L5.2 11 V6 Z" fill="#808080"/></svg>
<div class="t" style="left:943.3px;top:653px;font-size:12px;color:#2c3e5c;font-weight:normal;font-style:normal;letter-spacing:-0.12px;">Datum</div>
<div class="a" style="left:984px;top:646px;width:115px;height:24px;border:1px solid #e6ecf3;border-radius:4px;background:#fbfcfd"></div>
<div class="t" style="left:988.8px;top:653px;font-size:12px;color:#c9d4e2;font-weight:normal;font-style:normal;letter-spacing:-0.12px;">08.01.2026</div>
<svg class="a" style="left:1080px;top:651px" width="12" height="13" viewBox="0 0 12 13"><rect x="0.6" y="0.6" width="10.8" height="11.5" rx="1.5" fill="none" stroke="#d5dde8" stroke-width="1.2"/><path d="M0.6 3.8 H11.4" stroke="#d5dde8" stroke-width="1.2"/></svg>
<div class="t" style="left:1109.4px;top:653px;font-size:12px;color:#2c3e5c;font-weight:normal;font-style:normal;letter-spacing:-0.12px;">Menge</div>
<div class="a" style="left:1150px;top:646px;width:60px;height:24px;border:1px solid #b8cbe6;border-radius:4px;background:#fff"></div>
<div class="t" style="left:1156.4px;top:653px;font-size:12px;color:#2c3e5c;font-weight:normal;font-style:normal;letter-spacing:-0.12px;">1</div>
<div class="t" style="left:1221px;top:653px;font-size:12px;color:#2c3e5c;font-weight:normal;font-style:normal;letter-spacing:-0.12px;">Betrag</div>
<div class="t" style="left:1265px;top:653px;font-size:12px;color:#2c3e5c;font-weight:normal;font-style:normal;letter-spacing:-0.12px;">200,00</div>
<div class="a" style="left:1108px;top:678px;width:102px;height:28px;border:1px solid #b8cbe6;border-radius:4px;background:#fff"></div>
<svg class="a" style="left:1115px;top:687px" width="14" height="10" viewBox="0 0 14 10"><path d="M0.8 5 L4.5 8.7 L13 0.8" fill="none" stroke="#2f4a6e" stroke-width="1.5"/></svg>
<div class="t" style="left:1163.3px;top:686px;font-size:12px;color:#2c3e5c;font-weight:normal;font-style:normal;letter-spacing:-0.12px;">Ok</div>
<div class="a" style="left:1220px;top:680px;width:100px;height:24px;border:1px solid #b8cbe6;border-radius:4px;background:#fff"></div>
<svg class="a" style="left:1224px;top:685px" width="15" height="15" viewBox="0 0 15 15"><circle cx="7.5" cy="7.5" r="6.8" fill="none" stroke="#2f4a6e" stroke-width="1.3"/><path d="M5.2 5.2 L9.8 9.8 M9.8 5.2 L5.2 9.8" stroke="#2f4a6e" stroke-width="1.4"/></svg>
<div class="t" style="left:1251.9px;top:686px;font-size:12px;color:#2c3e5c;font-weight:normal;font-style:normal;letter-spacing:-0.12px;">Abbrechen</div>
<div class="a" style="left:252.2px;top:71px;width:57.5px;height:66px;border:3.7px solid #85001a"></div>
<div class="a" style="left:294.0px;top:54.2px;width:37.6px;height:37.6px;border-radius:50%;background:#85001a"></div>
<svg class="a" style="left:292.8px;top:53px" width="40" height="40" viewBox="0 0 40 40"><path d="M20.2 8.9 H23.6 V32 H20.2 V13.5 L14 18.2 L13.2 15.2 Z" fill="#fff"/></svg>
<div class="a" style="left:642.2px;top:254.8px;width:319.19999999999993px;height:34.80000000000001px;border:3.7px solid #85001a"></div>
<div class="a" style="left:935.2px;top:234.2px;width:37.6px;height:37.6px;border-radius:50%;background:#85001a"></div>
<div class="t" style="left:954.3px;transform:translateX(-50%);top:235px;font-size:34px;color:#fff;font-weight:normal;font-style:normal;-webkit-text-stroke:0.3px #fff;">2</div>
<div class="a" style="left:1256px;top:643px;width:64.70000000000005px;height:27.799999999999955px;border:3.7px solid #85001a"></div>
<div class="a" style="left:1237.2px;top:616.2px;width:37.6px;height:37.6px;border-radius:50%;background:#85001a"></div>
<div class="t" style="left:1256.3px;transform:translateX(-50%);top:617px;font-size:34px;color:#fff;font-weight:normal;font-style:normal;-webkit-text-stroke:0.3px #fff;">3</div>
<div class="a" style="left:1107.2px;top:675px;width:103.59999999999991px;height:32.60000000000002px;border:3.7px solid #85001a"></div>
<div class="a" style="left:1079.2px;top:656.2px;width:37.6px;height:37.6px;border-radius:50%;background:#85001a"></div>
<div class="t" style="left:1098.3px;transform:translateX(-50%);top:657px;font-size:34px;color:#fff;font-weight:normal;font-style:normal;-webkit-text-stroke:0.3px #fff;">4</div>
</body></html>
